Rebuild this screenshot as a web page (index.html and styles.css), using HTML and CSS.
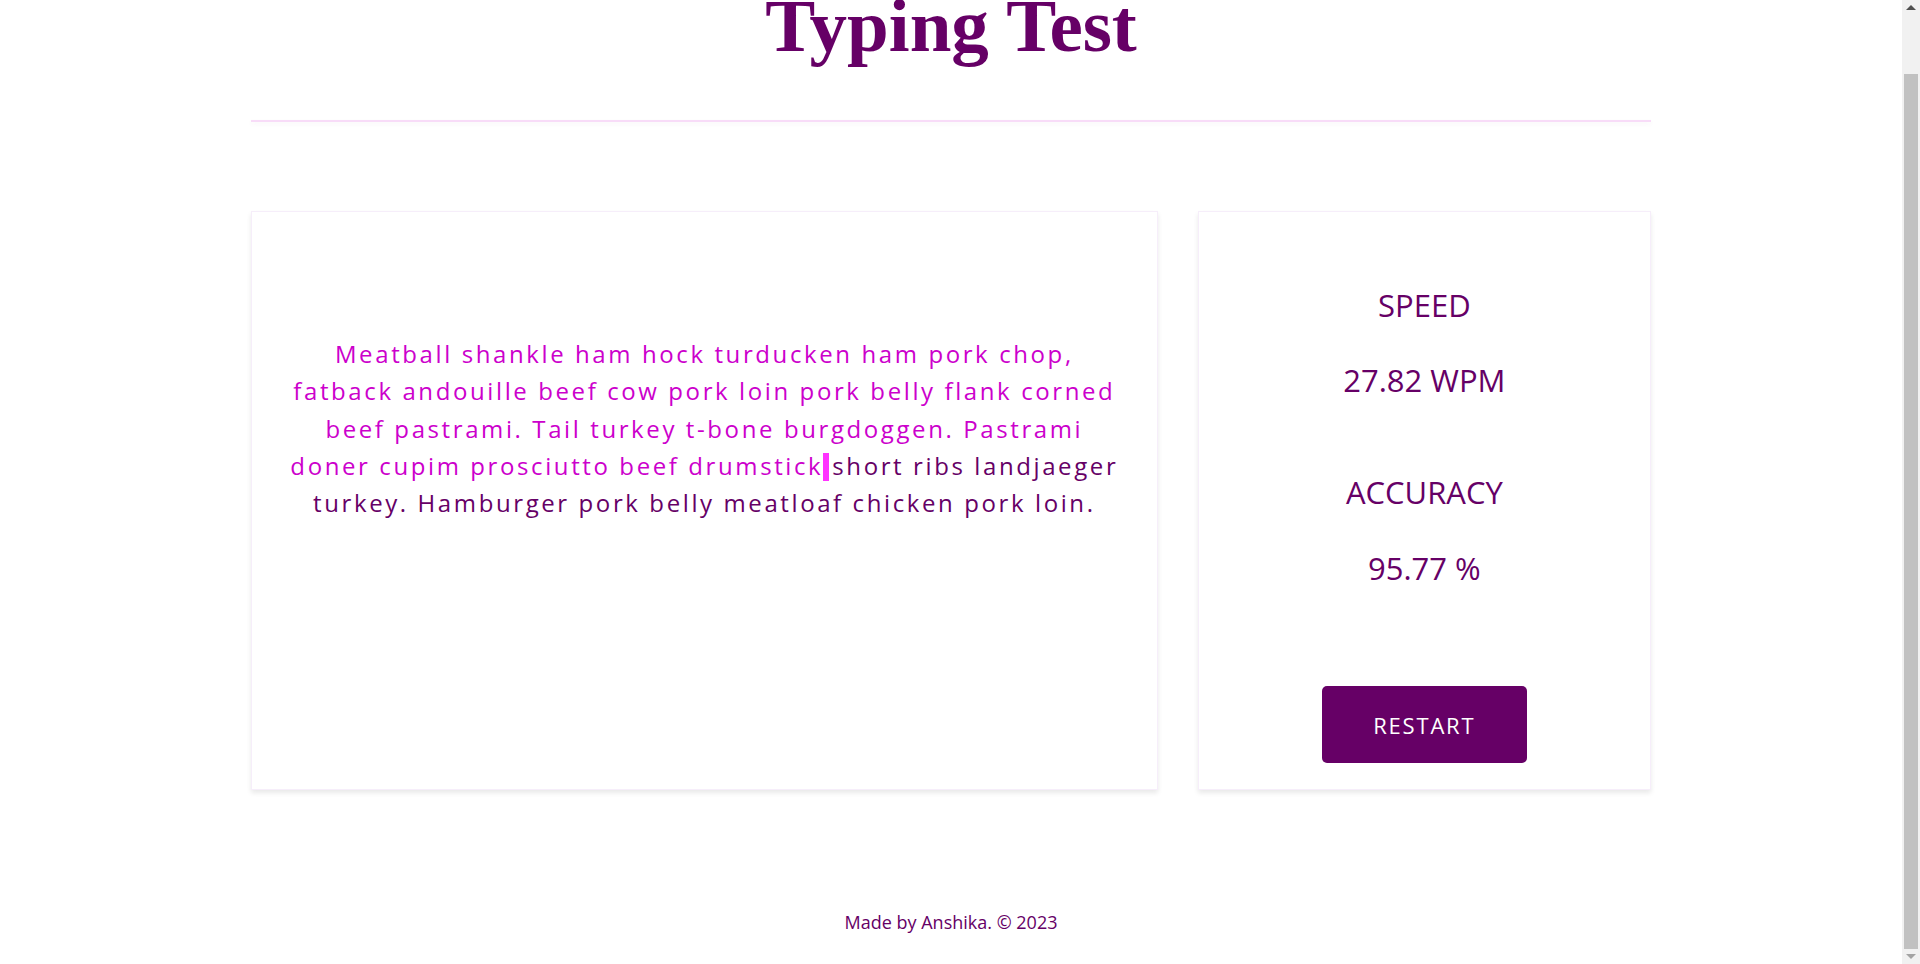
FILE: index.html
```html
<!DOCTYPE html>
<html lang="en">
<head>
<meta charset="utf-8">
<title>Typing Test</title>
<link rel="stylesheet" href="styles.css">
</head>
<body>
<header class="header">
  <h1 class="title">Typing Test</h1>
  <div class="rule"></div>
</header>
<main class="main">
  <section class="card text-card">
    <p class="quote"><span class="typed">Meatball shankle ham hock turducken ham pork chop, fatback andouille beef cow pork loin pork belly flank corned beef pastrami. Tail turkey t-bone burgdoggen. Pastrami doner cupim prosciutto beef drumstick</span><span class="cursor"></span><span class="pending">short ribs landjaeger turkey. Hamburger pork belly meatloaf chicken pork loin.</span></p>
  </section>
  <section class="card stats-card">
    <div class="stat-label">SPEED</div>
    <div class="stat-value">27.82 WPM</div>
    <div class="stat-label second">ACCURACY</div>
    <div class="stat-value">95.77 %</div>
    <button class="restart" type="button">RESTART</button>
  </section>
</main>
<footer class="footer">Made by Anshika. © 2023</footer>
<div class="scrollbar" aria-hidden="true">
  <svg class="arrow arrow-up" width="10" height="5" viewBox="0 0 10 5"><polygon points="0,5 10,5 5,0" fill="#505050"/></svg>
  <div class="thumb"></div>
  <svg class="arrow arrow-down" width="10" height="5" viewBox="0 0 10 5"><polygon points="0,0 10,0 5,5" fill="#a3a3a3"/></svg>
</div>
<script src="script.js"></script>
</body>
</html>
```
FILE: styles.css
```css
html, body {
  margin: 0;
  padding: 0;
  background: #ffffff;
}
html {
  scrollbar-width: none;
}
html::-webkit-scrollbar {
  display: none;
}
body {
  margin-right: 18px;
  font-family: "Open Sans", "Noto Sans", sans-serif;
  color: #660066;
}
.header {
  width: 1400px;
  margin: 0 auto;
  padding-top: 48px;
}
.title {
  margin: 0;
  font-family: "Liberation Serif", "Times New Roman", serif;
  font-weight: bold;
  font-size: 75px;
  line-height: 80px;
  text-align: center;
  color: #660066;
}
.rule {
  margin-top: 54px;
  height: 2px;
  background: #f8dcf8;
  box-shadow: 0 2px 4px rgba(120, 60, 120, 0.06);
}
.main {
  width: 1400px;
  margin: 89px auto 0;
  display: grid;
  grid-template-columns: 2fr 1fr;
  gap: 40px;
}
.card {
  background: #ffffff;
  border: 1px solid #f6eefa;
  box-shadow: 0 3px 5px rgba(0, 0, 0, 0.09);
}
.text-card {
  padding: 123px 0 0;
}
.quote {
  width: 836px;
  margin: 0 auto;
  font-size: 24px;
  line-height: 37.35px;
  letter-spacing: 2.6px;
  text-align: center;
}
.typed {
  color: #cc00cc;
}
.pending {
  color: #660066;
}
.cursor {
  display: inline-block;
  width: 6px;
  height: 28px;
  margin: 0 3px 0 0;
  background: #ff33ff;
  vertical-align: -6px;
}
.stats-card {
  padding: 73px 0 26px;
  display: flex;
  flex-direction: column;
  align-items: center;
}
.stat-label,
.stat-value {
  font-size: 31px;
  line-height: 40px;
  color: #660066;
}
.stat-value {
  margin-top: 35px;
}
.stat-label.second {
  margin-top: 72px;
}
.stat-value + .stat-label.second + .stat-value {
  margin-top: 36px;
}
.restart {
  margin-top: 98px;
  width: 205px;
  height: 77px;
  border: none;
  border-radius: 5px;
  background: #660066;
  color: #ffffff;
  font-family: "Open Sans", "Noto Sans", sans-serif;
  font-size: 22px;
  letter-spacing: 1.8px;
  cursor: pointer;
}
.footer {
  margin-top: 120px;
  padding-bottom: 30px;
  font-size: 18px;
  line-height: 24px;
  text-align: center;
  color: #660066;
}
.scrollbar {
  position: fixed;
  top: 0;
  right: 0;
  width: 18px;
  height: 100vh;
  background: #f1f1f1;
}
.arrow {
  position: absolute;
  left: 4px;
}
.arrow-up {
  top: 5px;
}
.arrow-down {
  bottom: 5px;
}
.thumb {
  position: absolute;
  left: 2px;
  right: 2px;
  top: 74px;
  bottom: 15px;
  background: #c1c1c1;
}
```
FILE: script.js
```js
function toBottom() {
  window.scrollTo(0, document.documentElement.scrollHeight);
}
toBottom();
window.addEventListener('load', toBottom);
```
